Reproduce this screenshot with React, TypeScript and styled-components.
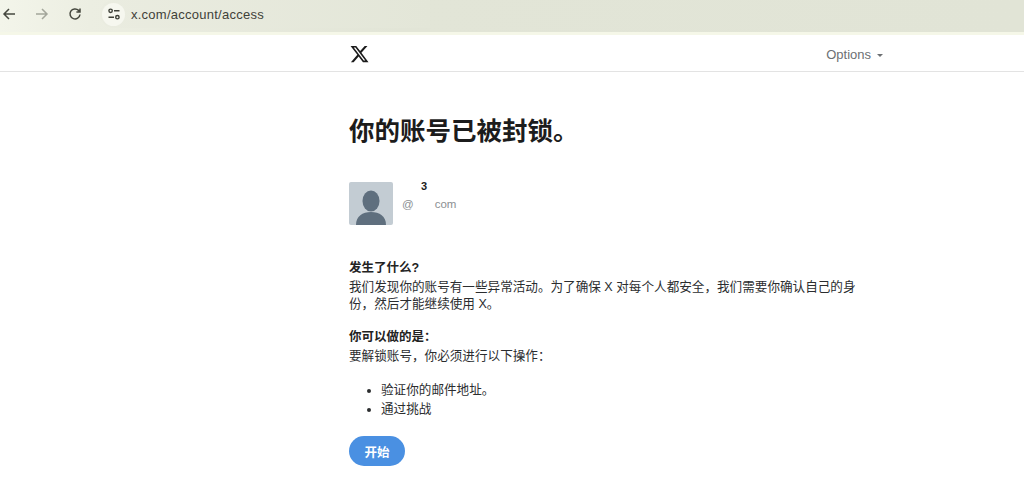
import React from 'react';
import styled, { createGlobalStyle } from 'styled-components';

const CJK = `"Liberation Sans", "Noto Sans CJK SC", sans-serif`;

const GlobalStyle = createGlobalStyle`
  html, body {
    margin: 0;
    padding: 0;
    background: #fff;
    font-family: ${CJK};
    color: #1d1f21;
  }
`;

const Page = styled.div`
  width: 1024px;
  height: 490px;
  overflow: hidden;
  background: #fff;
`;

const BrowserBar = styled.div`
  height: 32px;
  display: flex;
  align-items: flex-start;
  background: linear-gradient(90deg, #f3f5ea 0, #eceee2 90px, #e2e5d7 400px, #e1e4d6 100%);
  border-bottom: 3px solid #f5f7e8;
`;

const NavButtons = styled.div`
  width: 100px;
  height: 27px;
  display: flex;
  align-items: center;
  padding-left: 1px;
  gap: 17px;
  box-sizing: border-box;
`;

const NavIcon = styled.svg<{ $faded?: boolean }>`
  width: 16px;
  height: 16px;
  flex: none;
  fill: none;
  stroke: ${(p) => (p.$faded ? '#a3a69b' : '#46483f')};
  stroke-width: 1.5;
`;

const AddressPill = styled.div`
  height: 28px;
  width: 330px;
  display: flex;
  align-items: center;
  gap: 6px;
  padding-left: 2px;
  box-sizing: border-box;
  border-radius: 14px 0 0 14px;
  background: linear-gradient(90deg, #eaece0 0, #e3e6d8 100%);
`;

const SiteBadge = styled.div`
  width: 23px;
  height: 23px;
  border-radius: 50%;
  background: #f6f7ef;
  display: flex;
  align-items: center;
  justify-content: center;
`;

const SiteIcon = styled.svg`
  width: 14px;
  height: 14px;
  fill: none;
  stroke: #3d3f37;
  stroke-width: 1.4;
`;

const Url = styled.span`
  font-size: 13px;
  letter-spacing: 0.25px;
  color: #3f4139;
`;

const TopNav = styled.header`
  height: 36px;
  border-bottom: 1px solid #e3e3e3;
  background: #fff;
`;

const NavInner = styled.div`
  width: 534px;
  height: 100%;
  margin-left: 349px;
  display: flex;
  align-items: center;
  justify-content: space-between;
`;

const Logo = styled.svg`
  width: 21px;
  height: 20px;
  fill: #1b1b1b;
  margin-top: 1px;
`;

const OptionsMenu = styled.div`
  display: flex;
  align-items: center;
  gap: 6px;
  margin-top: 3px;
  font-size: 13px;
  color: #6c6f72;
`;

const Caret = styled.span`
  width: 0;
  height: 0;
  margin-top: 1px;
  border-left: 3.5px solid transparent;
  border-right: 3.5px solid transparent;
  border-top: 3.5px solid #6c6f72;
`;

const Content = styled.main`
  width: 515px;
  margin-left: 349px;
  display: flex;
  flex-direction: column;
  align-items: flex-start;
`;

const Title = styled.h1`
  margin: 43px 0 0;
  font-size: 25.5px;
  line-height: 32px;
  font-weight: 700;
  color: #1c1c1c;
`;

const AccountRow = styled.div`
  display: flex;
  gap: 9px;
  margin-top: 35px;
`;

const Avatar = styled.svg`
  width: 44px;
  height: 43px;
  border-radius: 2px;
`;

const AccountText = styled.div`
  display: flex;
  flex-direction: column;
`;

const AccountName = styled.span`
  height: 15px;
  padding-left: 19px;
  font-size: 11px;
  line-height: 9px;
  font-weight: 700;
  color: #1c1c1c;
`;

const AccountHandle = styled.div`
  display: flex;
  gap: 21px;
  font-size: 11.5px;
  line-height: 14px;
  color: #8b8f92;
`;

const Section = styled.section<{ $top: number }>`
  margin-top: ${(p) => p.$top}px;
  width: 100%;
`;

const SectionTitle = styled.h2`
  margin: 0;
  font-size: 12.5px;
  line-height: 18px;
  font-weight: 700;
  color: #222;
`;

const Paragraph = styled.p`
  margin: 2px 0 0;
  font-size: 12.6px;
  line-height: 17px;
  color: #2b2d2f;
`;

const Steps = styled.ul`
  margin: 16px 0 0;
  padding: 0 0 0 32px;
  font-size: 12.6px;
  line-height: 19px;
  color: #2b2d2f;
`;

const StartButton = styled.button`
  margin-top: 17px;
  width: 56px;
  height: 30px;
  padding: 0;
  border: none;
  border-radius: 15px;
  background: #4a90e2;
  color: #fff;
  font-family: ${CJK};
  font-size: 12.5px;
  font-weight: 700;
`;

export default function App() {
  return (
    <Page>
      <GlobalStyle />
      <BrowserBar>
        <NavButtons>
          <NavIcon viewBox="0 0 16 16">
            <path d="M14 8H3M8 3 3 8l5 5" />
          </NavIcon>
          <NavIcon viewBox="0 0 16 16" $faded>
            <path d="M2 8h11M8 3l5 5-5 5" />
          </NavIcon>
          <NavIcon viewBox="0 0 16 16">
            <path d="M13 8.5A5 5 0 1 1 11.6 4.4L13 5.8M13 2.5v3.6H9.4" />
          </NavIcon>
        </NavButtons>
        <AddressPill>
          <SiteBadge>
            <SiteIcon viewBox="0 0 14 14">
              <circle cx="3.6" cy="3.8" r="1.7" />
              <path d="M7 3.8h5.5M1.5 10.2H7" />
              <circle cx="10.4" cy="10.2" r="1.7" />
            </SiteIcon>
          </SiteBadge>
          <Url>x.com/account/access</Url>
        </AddressPill>
      </BrowserBar>
      <TopNav>
        <NavInner>
          <Logo viewBox="0 0 24 24">
            <path d="M18.24 2.25h3.31l-7.23 8.26 8.5 11.24h-6.66l-5.21-6.82-5.97 6.82H1.68l7.73-8.84L1.25 2.25h6.83l4.71 6.23 5.45-6.23Zm-1.16 17.52h1.83L7.08 4.13H5.12l11.96 15.64Z" />
          </Logo>
          <OptionsMenu>
            Options
            <Caret />
          </OptionsMenu>
        </NavInner>
      </TopNav>
      <Content>
        <Title>你的账号已被封锁。</Title>
        <AccountRow>
          <Avatar viewBox="0 0 44 43" preserveAspectRatio="none">
            <rect width="44" height="43" fill="#c3ccd3" />
            <ellipse cx="22" cy="19" rx="8.5" ry="10.5" fill="#5f6f7e" />
            <path d="M7 43c0-9 6.5-13 15-13s15 4 15 13Z" fill="#5f6f7e" />
          </Avatar>
          <AccountText>
            <AccountName>3</AccountName>
            <AccountHandle>
              <span>@</span>
              <span>com</span>
            </AccountHandle>
          </AccountText>
        </AccountRow>
        <Section $top={34}>
          <SectionTitle>发生了什么?</SectionTitle>
          <Paragraph>
            我们发现你的账号有一些异常活动。为了确保 X 对每个人都安全，我们需要你确认自己的身份，然后才能继续使用 X。
          </Paragraph>
        </Section>
        <Section $top={15}>
          <SectionTitle>你可以做的是：</SectionTitle>
          <Paragraph>要解锁账号，你必须进行以下操作：</Paragraph>
        </Section>
        <Steps>
          <li>验证你的邮件地址。</li>
          <li>通过挑战</li>
        </Steps>
        <StartButton>开始</StartButton>
      </Content>
    </Page>
  );
}
